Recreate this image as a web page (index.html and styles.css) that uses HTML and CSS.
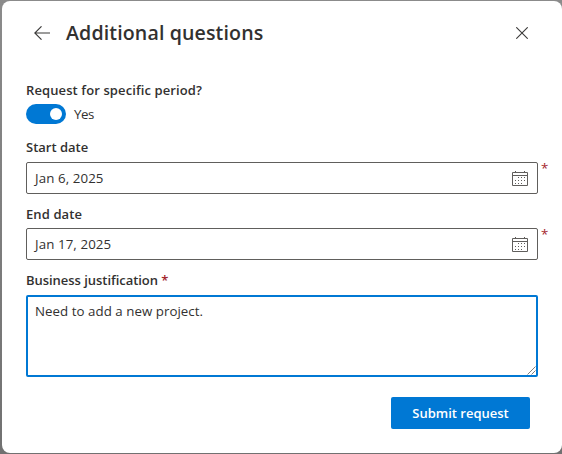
FILE: index.html
```
<!DOCTYPE html>
<html lang="en">
<head>
<meta charset="utf-8">
<title>Additional questions</title>
<link rel="stylesheet" href="styles.css">
</head>
<body>
<main class="dialog">
  <header class="header">
    <button class="icon-button" type="button" aria-label="Back">
      <svg width="16" height="14" viewBox="0 0 16 14"><path d="M7.5.3.8 7l6.7 6.7M.8 7h15.2"/></svg>
    </button>
    <h1 class="title">Additional questions</h1>
    <button class="icon-button close" type="button" aria-label="Close">
      <svg width="12" height="12" viewBox="0 0 12 12"><path d="m.3.3 11.4 11.4M11.7.3.3 11.7"/></svg>
    </button>
  </header>
  <form class="form">
    <div class="label period">Request for specific period?</div>
    <div class="toggle-row">
      <span class="toggle" role="switch" aria-checked="true"><span class="knob"></span></span>
      <span class="yes">Yes</span>
    </div>
    <div class="label start">Start date</div>
    <div class="field">
      <span class="date">Jan 6, 2025</span>
      <svg class="calendar" width="16" height="16" viewBox="0 0 16 16"><path d="M.5 2.5h15v13H.5zM.5 5.5h15M3.5 1v2M12.5 1v2"/><path class="dots" d="M6 7.5h7M3 10.5h10M3 13.5h7"/></svg>
      <span class="required">*</span>
    </div>
    <div class="label end">End date</div>
    <div class="field">
      <span class="date">Jan 17, 2025</span>
      <svg class="calendar" width="16" height="16" viewBox="0 0 16 16"><path d="M.5 2.5h15v13H.5zM.5 5.5h15M3.5 1v2M12.5 1v2"/><path class="dots" d="M6 7.5h7M3 10.5h10M3 13.5h7"/></svg>
      <span class="required">*</span>
    </div>
    <div class="label reason">Business justification <span class="star">*</span></div>
    <div class="textarea">
      <span class="message">Need to add a new project.</span>
      <svg class="grip" width="9" height="9" viewBox="0 0 9 9"><path d="M.5 8.5l8-8M4.5 8.5l4-4"/></svg>
    </div>
    <div class="actions"><button class="submit" type="button">Submit request</button></div>
  </form>
</main>
</body>
</html>
```
FILE: styles.css
```
* { box-sizing: border-box; }
body {
  margin: 0;
  height: 454px;
  padding: 1px 0 1px 2px;
  overflow: hidden;
  background: linear-gradient(#8b8b8b, #717171);
  color: #323130;
  font: 13.3px/20px "Open Sans", "Noto Sans", sans-serif;
}
.dialog {
  height: 452px;
  padding: 16px 24px 0;
  border-radius: 8px;
  background: #fff;
}
.header { display: flex; align-items: center; height: 32px; }
.icon-button {
  display: flex;
  align-items: center;
  justify-content: center;
  width: 32px;
  height: 32px;
  padding: 0;
  border: 0;
  background: none;
}
.icon-button path { fill: none; stroke: #3b3a39; stroke-width: 1.1; }
.title {
  margin: 0 0 0 8px;
  font-size: 19.6px;
  line-height: 28px;
  font-weight: 600;
  letter-spacing: .12px;
  white-space: nowrap;
}
.close { margin-left: auto; }
.form { padding-top: 31px; }
.label { height: 20px; font-size: 13px; font-weight: 600; white-space: nowrap; }
.period { letter-spacing: .11px; }
.toggle-row { display: flex; align-items: center; gap: 8px; height: 20px; margin-top: 4px; }
.toggle {
  display: flex;
  align-items: center;
  justify-content: flex-end;
  width: 40px;
  height: 20px;
  padding-right: 4px;
  border-radius: 10px;
  background: #0078d4;
}
.knob { width: 12px; height: 12px; border-radius: 50%; background: #fff; }
.yes { letter-spacing: -.5px; }
.start { margin-top: 13px; margin-bottom: 5px; }
.end { margin-top: 10px; margin-bottom: 4px; letter-spacing: .1px; }
.reason { margin-top: 10px; margin-bottom: 5px; letter-spacing: -.04px; }
.field {
  position: relative;
  display: flex;
  align-items: center;
  justify-content: space-between;
  width: 512px;
  height: 32px;
  padding: 0 9px 0 8px;
  border: 1px solid #605e5c;
  border-radius: 2px;
}
.date { letter-spacing: .1px; }
.calendar path { fill: none; stroke: #605e5c; stroke-width: 1; }
.calendar .dots { stroke-dasharray: 1 2; }
.required { position: absolute; left: 514px; top: -5px; color: #a4262c; }
.star { color: #a4262c; }
.textarea {
  position: relative;
  width: 512px;
  height: 82px;
  padding: 4px 7px;
  border: 2px solid #0078d4;
  border-radius: 2px;
}
.message { letter-spacing: .04px; }
.grip { position: absolute; right: 0; bottom: 0; }
.grip path { stroke: #605e5c; stroke-width: .8; fill: none; }
.actions { display: flex; justify-content: flex-end; padding: 20px 8px 0 0; }
.submit {
  width: 139px;
  height: 32px;
  padding: 0;
  border: 0;
  border-radius: 2px;
  background: #0078d4;
  color: #fff;
  font: 600 13px/20px "Open Sans", "Noto Sans", sans-serif;
}
```
